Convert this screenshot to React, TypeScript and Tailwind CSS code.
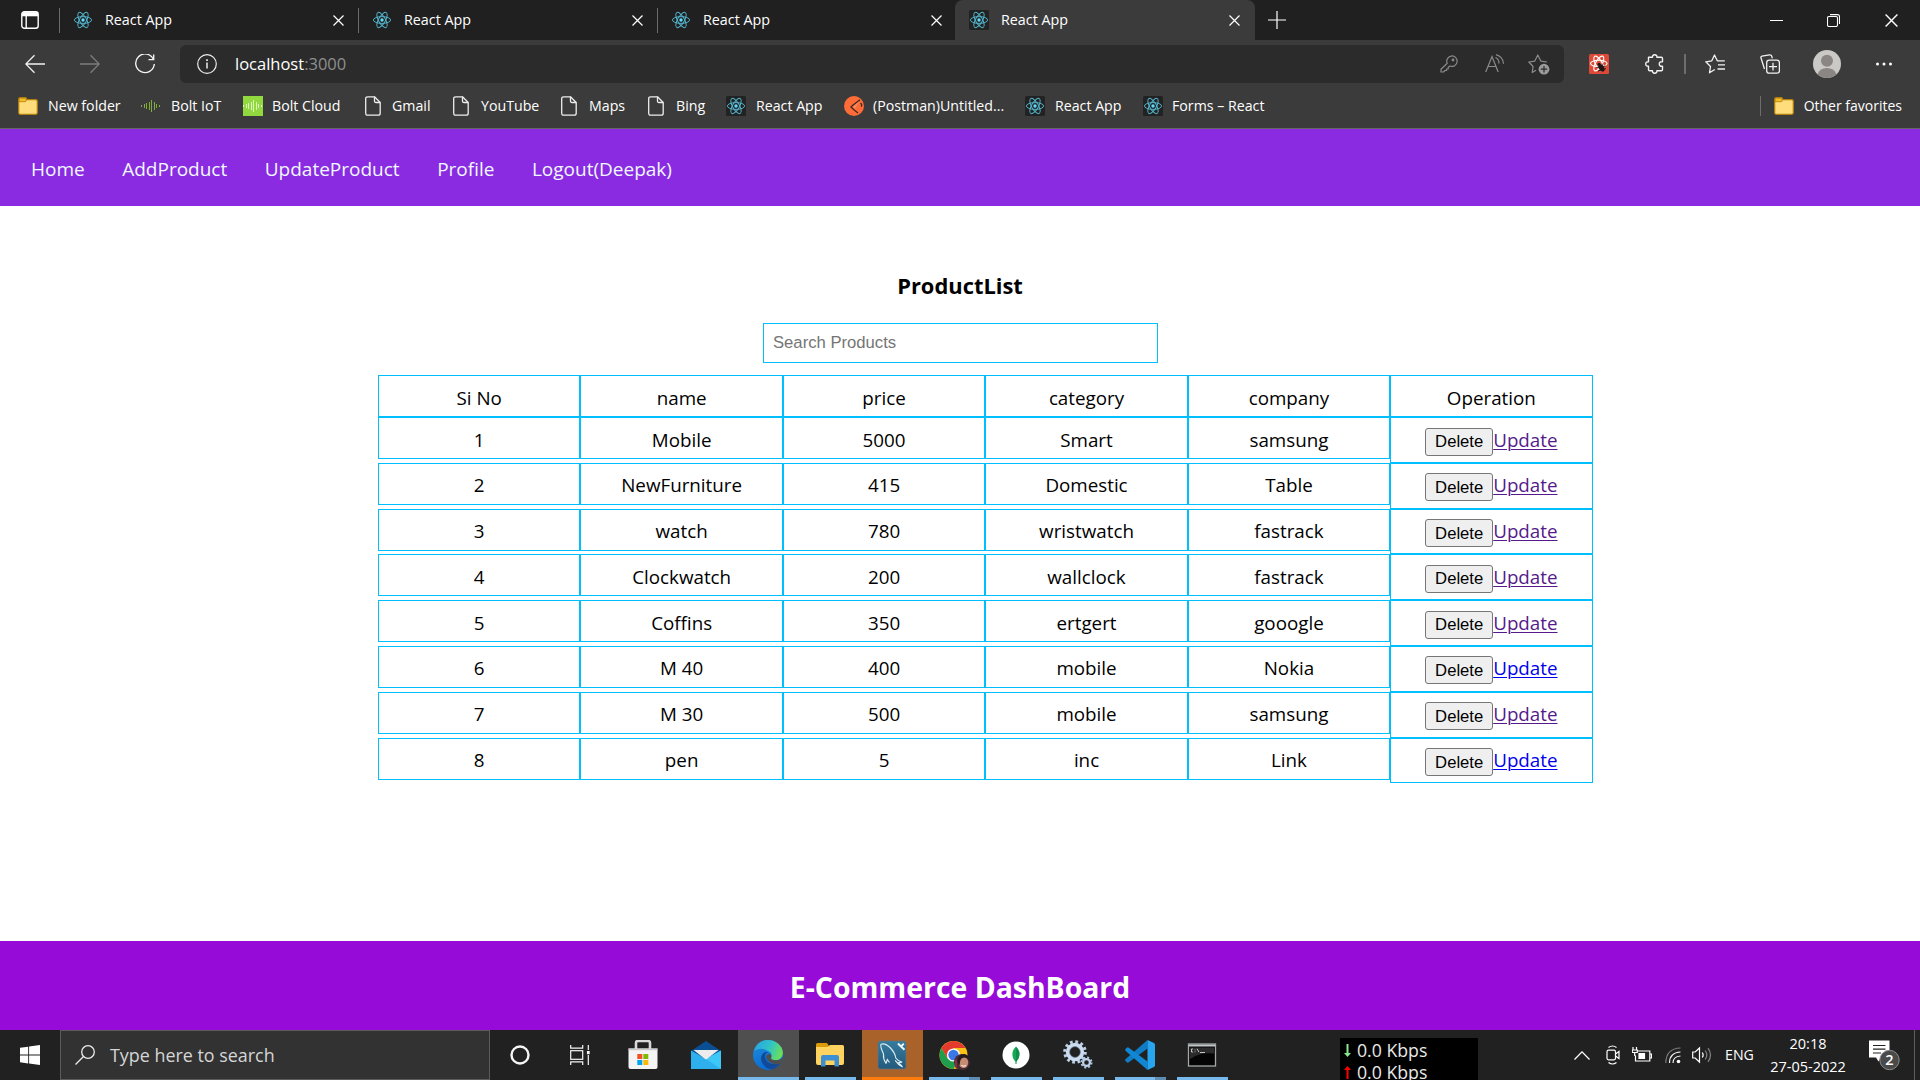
import type { ReactNode } from "react";

const OPEN = "font-['Open_Sans','Noto_Sans',sans-serif]";

function ReactLogo({ dark = false, className = "size-5" }: { dark?: boolean; className?: string }) {
  return (
    <svg viewBox="0 0 20 20" className={className}>
      {dark && <rect width="20" height="20" rx="1.5" fill="#222" />}
      <g fill="none" stroke="#53b6cf" strokeWidth="0.95">
        <ellipse cx="10" cy="10" rx="8.6" ry="3.4" />
        <ellipse cx="10" cy="10" rx="8.6" ry="3.4" transform="rotate(60 10 10)" />
        <ellipse cx="10" cy="10" rx="8.6" ry="3.4" transform="rotate(120 10 10)" />
      </g>
      <circle cx="10" cy="10" r="1.7" fill="#61dafb" />
    </svg>
  );
}

function Cross({ className = "size-[11px]" }: { className?: string }) {
  return (
    <svg viewBox="0 0 11 11" className={className} fill="none" stroke="#fff" strokeWidth="1.2">
      <path d="M.5.5l10 10M10.5.5l-10 10" />
    </svg>
  );
}

function Tab({ active = false }: { active?: boolean }) {
  return (
    <div
      className={
        active
          ? "-ml-px flex h-10 w-[300px] shrink-0 items-center rounded-t-lg bg-[#3b3b3b] pl-[14px]"
          : "relative flex h-10 w-[299px] shrink-0 items-center pl-[14px]"
      }
    >
      {!active && <span className="absolute left-0 top-2 h-[25px] w-px bg-[#6b6b6b]" />}
      <ReactLogo dark={active} />
      <span className="ml-[12px] w-[228px] text-[14.3px] leading-5 text-white">React App</span>
      <Cross />
    </div>
  );
}

function Folder() {
  return (
    <svg viewBox="0 0 20 18" className="h-[18px] w-5 shrink-0">
      <path d="M.7 2.2Q.7.7 2.2.7h5q1.2 0 1.4 1.2v.8h9.200q1.500 0 1.500 1.500v11.600q0 1.500-1.500 1.500H2.200q-1.500 0-1.500-1.500z" fill="#ffdc7c" stroke="#b07f0c" strokeWidth="1.2" />
      <path d="M1.200 2.200Q1.200 1.200 2.200 1.200h5q1 0 1 1v1.300q0 1.200-1.200 1.200H1.200z" fill="#f5bd28" stroke="#b07f0c" strokeWidth=".8" />
    </svg>
  );
}

function Wave({ tile = false }: { tile?: boolean }) {
  return (
    <svg viewBox="0 0 20 20" className="size-5 shrink-0">
      {tile && <rect width="20" height="20" fill="#92d83f" />}
      <path
        d="M.5 9v2M3.500 8v4M5.500 7v6M8.500 6v8M10.500 4v12M13.500 6v8M15.500 8v4M18.500 9v2"
        stroke={tile ? "#dcf6bd" : "#7fae3a"}
        strokeWidth="1"
      />
    </svg>
  );
}

function PageIcon() {
  return (
    <svg viewBox="0 0 16 20" className="h-5 w-4 shrink-0" fill="none" stroke="#eee" strokeWidth="1.3" strokeLinejoin="round">
      <path d="M2.700.8H9.500l5.700 5.700v10.700q0 2-2 2H2.700q-2 0-2-2V2.800q0-2 2-2z" />
      <path d="M9.500.8v4.200q0 1.500 1.500 1.500h4.200" />
    </svg>
  );
}

function Postman() {
  return (
    <svg viewBox="0 0 20 20" className="size-5 shrink-0">
      <circle cx="10" cy="10" r="10" fill="#ff6c37" />
      <path d="M16 3.800L8.500 9.500 7 11l3.500 3.200M10.500 14.200L14 17M16.500 7q2 1.500.8 3.800" fill="none" stroke="#3b2a24" strokeWidth="1.300" />
      <path d="M15.500 5L9 11l2 1.500z" fill="#ff8d63" />
    </svg>
  );
}

const bookmarks: { icon: ReactNode; label: string; box: string }[] = [
  { icon: <Folder />, label: "New folder", box: "w-[123px] gap-[10px]" },
  { icon: <Wave />, label: "Bolt IoT", box: "w-[102px] gap-[10px]" },
  { icon: <Wave tile />, label: "Bolt Cloud", box: "w-[122px] gap-[9px]" },
  { icon: <PageIcon />, label: "Gmail", box: "w-[88px] gap-[11px]" },
  { icon: <PageIcon />, label: "YouTube", box: "w-[108px] gap-[12px]" },
  { icon: <PageIcon />, label: "Maps", box: "w-[87px] gap-[12px]" },
  { icon: <PageIcon />, label: "Bing", box: "w-[78px] gap-[12px]" },
  { icon: <ReactLogo dark />, label: "React App", box: "w-[118px] gap-[10px]" },
  { icon: <Postman />, label: "(Postman)Untitled...", box: "w-[181px] gap-[9px]" },
  { icon: <ReactLogo dark />, label: "React App", box: "w-[118px] gap-[10px]" },
  { icon: <ReactLogo dark />, label: "Forms – React", box: "w-[130px] gap-[9px]" },
];

function TabStrip() {
  return (
    <div className="flex h-10 items-center bg-[#202020]">
      <div className="flex w-[59px] shrink-0 justify-center">
        <svg viewBox="0 0 18 18" className="size-[18px]" fill="none" stroke="#fff" strokeWidth="1.400">
          <rect x=".8" y=".8" width="16.400" height="16.400" rx="2.500" />
          <path d="M1 3.200h16" strokeWidth="4.200" />
          <path d="M5.200 5v12" />
        </svg>
      </div>
      <Tab />
      <Tab />
      <Tab />
      <Tab active />
      <svg viewBox="0 0 18 18" className="ml-[13px] size-[18px]" stroke="#fff" strokeWidth="1.200">
        <path d="M9 0v18M0 9h18" />
      </svg>
      <div className="ml-auto flex items-center pr-[22px]">
        <svg viewBox="0 0 13 13" className="mr-[44px] size-[13px]" stroke="#fff" strokeWidth="1">
          <path d="M0 6.500h13" />
        </svg>
        <svg viewBox="0 0 13 13" className="mr-[45px] size-[13px]" fill="none" stroke="#fff" strokeWidth="1.100">
          <rect x=".5" y="2.500" width="10" height="10" rx="1.500" />
          <path d="M3 .6h7.500q2 0 2 2V10" />
        </svg>
        <Cross className="size-[13px]" />
      </div>
    </div>
  );
}

function Toolbar() {
  return (
    <div className="flex h-[48px] items-center">
      <svg viewBox="0 0 20 20" className="ml-[25px] size-5" fill="none" stroke="#f2f2f2" strokeWidth="1.300">
        <path d="M20 10H.8M9.500 1.200L.8 10l8.700 8.800" />
      </svg>
      <svg viewBox="0 0 20 20" className="ml-[35px] size-5" fill="none" stroke="#7d7d7d" strokeWidth="1.300">
        <path d="M0 10h19.200M10.500 1.200l8.700 8.800-8.700 8.800" />
      </svg>
      <svg viewBox="0 0 20 20" className="ml-[35px] size-5" fill="none" stroke="#f2f2f2" strokeWidth="1.400">
        <path d="M18.500 5.400A9.300 9.300 0 1 0 19.300 10M13.500 5.600h5.200V.4" />
      </svg>
      <div className="ml-[25px] flex h-[38px] w-[1384px] shrink-0 items-center rounded-md bg-[#2b2b2b]">
        <svg viewBox="0 0 20 20" className="ml-[17px] size-5" fill="none" stroke="#ececec" strokeWidth="1.200">
          <circle cx="10" cy="10" r="9.300" />
          <path d="M10 8.500v6" strokeWidth="1.500" />
          <path d="M10 5.200v1.700" strokeWidth="1.700" />
        </svg>
        <span className="ml-[18px] text-[16.5px] leading-6 text-white">
          localhost<span className="text-[#8f8f8f]">:3000</span>
        </span>
        <div className="ml-auto flex items-center pr-[14px]">
          <svg viewBox="0 0 18 18" className="mr-[27px] size-[18px]" fill="none" stroke="#8c8c8c" strokeWidth="1.200" strokeLinejoin="round">
            <path d="M7.200 8.300A5.200 5.200 0 1 1 10 11L8.200 12.300V14H6.500v1.500H5L3.500 17H1v-2.800z" />
            <circle cx="13" cy="5" r=".8" />
          </svg>
          <svg viewBox="0 0 20 20" className="mr-[23px] size-5" fill="none" stroke="#8c8c8c" strokeWidth="1.200">
            <path d="M.7 18L7 2.500 13.200 18M3 12.500h8M10.500 3.500q3.500 1.500 3.500 6M11 .7q7 2 7.500 9" />
          </svg>
          <svg viewBox="0 0 22 22" className="size-[22px]">
            <path d="M8 17.200L4.200 19.500l.9-6L.8 9l6-.9L9.800 2l3 6.100 6.200.9" fill="none" stroke="#8c8c8c" strokeWidth="1.200" strokeLinejoin="round" />
            <circle cx="16" cy="16.200" r="5.400" fill="#9b9b9b" />
            <path d="M16 13v6.400M12.800 16.200h6.400" stroke="#2b2b2b" strokeWidth="1.200" />
          </svg>
        </div>
      </div>
      <svg viewBox="0 0 20 20" className="ml-[25px] size-5 shrink-0">
        <rect width="20" height="20" rx="1.500" fill="#de4a37" />
        <g fill="none" stroke="#fff" strokeWidth="1.100">
          <ellipse cx="9.800" cy="9.500" rx="8.300" ry="3.200" />
          <ellipse cx="9.800" cy="9.500" rx="8.300" ry="3.200" transform="rotate(60 9.800 9.500)" />
          <ellipse cx="9.800" cy="9.500" rx="8.300" ry="3.200" transform="rotate(120 9.800 9.500)" />
        </g>
        <ellipse cx="12.500" cy="14" rx="2.600" ry="4" transform="rotate(-35 12.500 14)" fill="#251412" />
        <circle cx="10" cy="10.200" r="1.500" fill="#251412" />
        <path d="M7.500 13.500l9-1.500M9 17l8-2.500M13 9.500l1 8" stroke="#251412" strokeWidth=".9" />
      </svg>
      <svg viewBox="0 0 20 20" className="ml-[36px] size-5 shrink-0" fill="none" stroke="#f2f2f2" strokeWidth="1.400" strokeLinejoin="round">
        <path d="M3.500 3.300h4q-.3-2.500 2.200-2.500t2.200 2.500h4.400q1.200 0 1.200 1.200v3.300q-3.200-.3-3.200 2.200t3.200 2.200v3.300q0 1.200-1.200 1.200h-4.400q.2 2.500-2.200 2.500t-2.200-2.500H4.700q-1.200 0-1.200-1.200v-3.300Q.7 12.300.7 10t2.800-2.200z" />
      </svg>
      <span className="ml-[19px] h-5 w-[1.5px] shrink-0 bg-[#6d6d6d]" />
      <svg viewBox="0 0 20 20" className="ml-[19px] size-5 shrink-0" fill="none" stroke="#f2f2f2" strokeWidth="1.300" strokeLinejoin="round">
        <path d="M9.800 15.500L4.500 18.800l1-6.300L.8 7.800l6-1L9.500 1l2.800 5.800h7.500M13 10.800h7M12.500 15h7.500" />
      </svg>
      <svg viewBox="0 0 20 20" className="ml-[35px] size-5 shrink-0" fill="none" stroke="#f2f2f2" strokeWidth="1.300">
        <path d="M4.500 15L1 4Q.5 2.500 2 2.100L9.500.8q1.800-.2 2.300 1.500l.5 2" />
        <rect x="6.700" y="6.200" width="12.700" height="13" rx="2.500" />
        <path d="M13 8.800v7.800M9 12.700h8" />
      </svg>
      <svg viewBox="0 0 28 28" className="ml-[33px] size-7 shrink-0">
        <circle cx="14" cy="14" r="14" fill="#cbc9c6" />
        <circle cx="14" cy="10.800" r="6" fill="#8b8683" />
        <path d="M4.500 24.200Q7 18 14 18t9.500 6.200Q19.500 28 14 28t-9.500-3.800z" fill="#8b8683" />
      </svg>
      <svg viewBox="0 0 18 4" className="ml-[34px] h-1 w-[18px] shrink-0" fill="#fff">
        <circle cx="2.500" cy="2" r="1.500" />
        <circle cx="9" cy="2" r="1.500" />
        <circle cx="15.500" cy="2" r="1.500" />
      </svg>
    </div>
  );
}

function BookmarkBar() {
  return (
    <div className="flex h-[36px] items-center pl-[18px] text-[14.2px] leading-5 text-white">
      {bookmarks.map((b, i) => (
        <div key={i} className={`flex shrink-0 items-center whitespace-nowrap ${b.box}`}>
          {b.icon}
          {b.label}
        </div>
      ))}
      <div className="ml-auto flex items-center pr-[18px]">
        <span className="mr-[13px] h-5 w-px bg-[#6d6d6d]" />
        <Folder />
        <span className="ml-[10px] text-[14px]">Other favorites</span>
      </div>
    </div>
  );
}

const products: [string, string, string, string, boolean][] = [
  ["Mobile", "5000", "Smart", "samsung", true],
  ["NewFurniture", "415", "Domestic", "Table", true],
  ["watch", "780", "wristwatch", "fastrack", true],
  ["Clockwatch", "200", "wallclock", "fastrack", true],
  ["Coffins", "350", "ertgert", "gooogle", true],
  ["M 40", "400", "mobile", "Nokia", false],
  ["M 30", "500", "mobile", "samsung", true],
  ["pen", "5", "inc", "Link", false],
];

function Cell({ children }: { children: ReactNode }) {
  return <li className="flex h-[42px] items-center justify-center border border-[#00bfff] pt-[4px]">{children}</li>;
}

function ProductTable() {
  return (
    <div className="ml-[378px] mt-[12px] w-[1214.6px] text-[18.8px] leading-[27px] text-black">
      <ul className="grid h-[42px] grid-cols-6">
        {["Si No", "name", "price", "category", "company", "Operation"].map((h) => (
          <Cell key={h}>{h}</Cell>
        ))}
      </ul>
      {products.map(([name, price, category, company, visited], i) => (
        <ul key={i} className="grid h-[45.8px] grid-cols-6 items-start">
          <Cell>{i + 1}</Cell>
          <Cell>{name}</Cell>
          <Cell>{price}</Cell>
          <Cell>{category}</Cell>
          <Cell>{company}</Cell>
          <li className="flex h-[45.8px] items-start justify-center border border-[#00bfff]">
            <button className="mt-[9.5px] h-[28px] w-[68px] rounded-[3px] border border-[#767676] bg-[#efefef] font-['Liberation_Sans',Arial,sans-serif] text-[16.67px] leading-[25px]">
              Delete
            </button>
            <a
              className={
                visited
                  ? "mt-[8.5px] text-[#551a8b] underline decoration-1 underline-offset-[2px]"
                  : "mt-[8.5px] text-[#0000ee] underline decoration-1 underline-offset-[2px]"
              }
            >
              Update
            </a>
          </li>
        </ul>
      ))}
    </div>
  );
}

function Store() {
  return (
    <svg viewBox="0 0 30 30" className="size-[30px]">
      <path d="M8 9V3q0-2 2-2h10q2 0 2 2v6" fill="none" stroke="#d8d8d8" strokeWidth="2.600" />
      <path d="M.5 8.500h29V27q0 2-2 2h-25q-2 0-2-2z" fill="#f4f4f4" />
      <path d="M.5 8.500h29v1.700H.5z" fill="#c9c9c9" />
      <path d="M9.300 14h5v5h-5z" fill="#f25022" />
      <path d="M15.300 14h5v5h-5z" fill="#7fba00" />
      <path d="M9.300 20h5v5h-5z" fill="#00a4ef" />
      <path d="M15.300 20h5v5h-5z" fill="#ffb900" />
    </svg>
  );
}

function Mail() {
  return (
    <svg viewBox="0 0 30 30" className="size-[30px]">
      <path d="M0 11L15 1l15 10v5H0z" fill="#0a4e94" />
      <path d="M0 10.500L15 19 30 10.500V29H0z" fill="#2fb0ee" />
      <path d="M15 19L30 10.500V29z" fill="#3dc7f7" />
      <path d="M2.500 10h25L16 19q-1 .6-2 0z" fill="#ececec" />
    </svg>
  );
}

function Edge() {
  return (
    <svg viewBox="0 0 30 30" className="size-[30px]">
      <defs>
        <linearGradient id="edgeTop" x1="0" y1="0.300" x2="1" y2="0.600">
          <stop offset="0" stopColor="#2aa5e0" />
          <stop offset=".5" stopColor="#2fc3c8" />
          <stop offset="1" stopColor="#6fe052" />
        </linearGradient>
        <linearGradient id="edgeSide" x1="0" y1="0" x2="0.300" y2="1">
          <stop offset="0" stopColor="#1f8fdc" />
          <stop offset="1" stopColor="#0a6cd0" />
        </linearGradient>
      </defs>
      <circle cx="15" cy="15" r="15" fill="url(#edgeSide)" />
      <path d="M1 11Q4 0 15 0q9 0 13.500 7.500Q32 15 27 19q-4 2.500-9 .5-1.500-1 0-3 1.500-4-3-5.500Q8 6.500 1 11z" fill="url(#edgeTop)" />
      <path d="M10.500 13q-4 4-1.500 9.500 3.500 7 10.500 6.700 5-1.500 8.500-7-6 3.300-11.500.8Q11 20 12.500 14.500q.5-1.500 2.500-2.500-2.500-.5-4.500 1z" fill="#114a9b" />
      <path d="M18.500 19.300q5 2 9 0l2.500-1.500-2 5.500q-5 2.300-9.500-.3-5-2-5.300-6.500.5-3 2.800-2.500 3 .5 2.500 3-1 1.300 0 2.300z" fill="#4e4e4e" />
    </svg>
  );
}

function Explorer() {
  return (
    <svg viewBox="0 0 30 30" className="size-[30px]">
      <path d="M1 4.500Q1 3 2.500 3h9.500l2 3v4H1z" fill="#dc9a0a" />
      <path d="M1 7h11.500L15 5h12.500Q29 5 29 6.500V23q0 2-2 2H3q-2 0-2-2z" fill="#ffd35f" />
      <path d="M6 26.500V17q0-2 2-2h14q2 0 2 2v9.500h-4.500V20.500h-9v6z" fill="#3d8fd4" />
    </svg>
  );
}

function Dolphin() {
  return (
    <svg viewBox="0 0 30 30" className="size-[30px]">
      <defs>
        <linearGradient id="sea" x1="0" y1="0" x2="0" y2="1">
          <stop offset="0" stopColor="#357c9f" />
          <stop offset="1" stopColor="#225a7c" />
        </linearGradient>
      </defs>
      <rect x="1" y="1" width="28" height="28" rx="2.500" fill="url(#sea)" stroke="#6a7378" strokeWidth=".7" />
      <path d="M9 23.500Q6 19 6.500 14 3 6.500 4 4.300q4-1.800 9 3.200 5 5 5.800 10.500 2 3 6.400 4.300-3 0-4 .4 2.500 1.700 4.300 4.200-4.500-2.200-7.300-6.500M9 23.500l1.300-4 2.200 3" fill="none" stroke="#e0edf2" strokeWidth="1.100" />
      <path d="M21 3.500l3 3 3.500 3.200M24 6.500l2.800-2.800" stroke="#f1f6f8" strokeWidth="1.900" />
    </svg>
  );
}

function Chrome() {
  return (
    <svg viewBox="0 0 32 30" className="ml-[2px] h-[30px] w-8">
      <circle cx="14.500" cy="15" r="14" fill="#fbc116" />
      <path d="M2.400 8A14 14 0 0 1 26.600 8H14.500l-6 10.500z" fill="#e33b2e" />
      <path d="M2.400 8A14 14 0 0 0 14.500 29l6-10.500H8.500z" fill="#1f9d4d" />
      <circle cx="14.500" cy="15" r="6.600" fill="#fff" />
      <circle cx="14.500" cy="15" r="5.200" fill="#3b78e7" />
      <circle cx="23" cy="22" r="8" fill="#4b2b35" />
      <ellipse cx="24.500" cy="22.500" rx="4.700" ry="5.500" fill="#c58b72" />
      <path d="M18.500 22q0-8 7-8 5.500 1 5.300 8-2-5-6-4.500-4.300.5-4 8z" fill="#251c20" />
      <path d="M16 20v7l2 2v-10z" fill="#8d2a3e" />
      <path d="M22.500 25.500q2.500 1.500 4.500 0" stroke="#fff" strokeWidth="1" fill="none" />
    </svg>
  );
}

function Mongo() {
  return (
    <svg viewBox="0 0 30 30" className="size-[30px]">
      <circle cx="15" cy="15" r="13.500" fill="#fff" />
      <path d="M15 6.500q-4 4-3.600 8.600Q11.800 19.500 15 22z" fill="#13aa52" />
      <path d="M15 6.500q4 4 3.600 8.600Q18.200 19.500 15 22z" fill="#118d4d" />
      <path d="M15 20v4" stroke="#118d4d" />
    </svg>
  );
}

function Gears() {
  return (
    <svg viewBox="0 0 30 30" className="size-[30px]" fill="none">
      <circle cx="12" cy="12" r="10.200" stroke="#bcd0e6" strokeWidth="3.200" strokeDasharray="2.700 2.640" />
      <circle cx="12" cy="12" r="7.300" stroke="#cbdcf0" strokeWidth="3.800" />
      <circle cx="12" cy="12" r="5.400" stroke="#6e8196" strokeWidth=".6" />
      <circle cx="23.500" cy="22.500" r="5" stroke="#a9c4e4" strokeWidth="2" strokeDasharray="2 1.930" />
      <circle cx="23.500" cy="22.500" r="3.400" stroke="#bcd0e6" strokeWidth="2.200" />
    </svg>
  );
}

function Code() {
  return (
    <svg viewBox="0 0 30 30" className="size-[30px]">
      <path d="M22.500 0v8.500L3.500 22.500Q2.500 23 1.700 22.300L.5 21q-.8-1 .2-1.900z" fill="#0f7cc6" />
      <path d="M22.500 30v-8.500L3.500 7.500Q2.500 7 1.700 7.700L.5 9q-.8 1 .2 1.900z" fill="#1186d2" />
      <path d="M22.500 0L29 3q1 .5 1 1.700v20.600q0 1.200-1 1.700l-6.500 3z" fill="#27a5ef" />
    </svg>
  );
}

function Terminal() {
  return (
    <svg viewBox="0 0 30 30" className="size-[30px]">
      <rect x="1.500" y="4" width="27" height="22" fill="#050505" stroke="#a4a8aa" strokeWidth="1.300" />
      <path d="M2 5.500h26" stroke="#c3c6c8" strokeWidth="2" />
      <path d="M3 7.500h24v6Q13 12 3 19z" fill="#2b2b2b" />
      <path d="M6 9h-1.500v3H6M8 9.500v.8M8 11.500v.8M10 8.700l2 3.500M13 12.500h5" fill="none" stroke="#d5d5d5" strokeWidth=".9" />
    </svg>
  );
}

function TaskButton({ children, tone = "plain" }: { children: ReactNode; tone?: "plain" | "running" | "stacked" | "active" | "alert" }) {
  const bg = tone === "active" ? "bg-[#4f4f4f]" : tone === "alert" ? "bg-[#a9622a]" : "";
  return (
    <div className="flex h-[50px] w-[62px] shrink-0 flex-col items-center">
      <div className={`flex h-[47px] w-[61px] items-center justify-center pt-[3px] ${bg}`}>{children}</div>
      {tone === "active" && <div className="h-[3px] w-[61px] bg-[#76b9ed]" />}
      {tone === "alert" && <div className="h-[3px] w-[61px] bg-[#ff7b0b]" />}
      {tone === "running" && <div className="h-[3px] w-[51px] bg-[#76b9ed]" />}
      {tone === "stacked" && (
        <div className="flex h-[3px] w-[51px]">
          <div className="w-[40px] bg-[#76b9ed]" />
          <div className="w-[11px] bg-[#5d8db3]" />
        </div>
      )}
    </div>
  );
}

function Taskbar() {
  return (
    <div className="flex h-[50px] items-center bg-[#212121] text-white">
      <div className="flex w-[60px] shrink-0 justify-center">
        <svg viewBox="0 0 20 20" className="size-5" fill="#fff">
          <path d="M0 2.800L8.200 1.700V9.600H0zM9.100 1.600L20 0v9.600H9.100zM0 10.500h8.200v7.900L0 17.300zM9.100 10.500H20V20L9.100 18.500z" />
        </svg>
      </div>
      <div className="flex h-[50px] w-[430px] shrink-0 items-center border border-[#5c5c5c] bg-[#323232]">
        <svg viewBox="0 0 20 20" className="ml-[14px] size-5" fill="none" stroke="#ededed" strokeWidth="1.300">
          <circle cx="13" cy="7" r="6.300" />
          <path d="M8.500 11.500L.5 19.500" />
        </svg>
        <span className="ml-[15px] text-[17.9px] leading-6 text-[#d6d6d6]">Type here to search</span>
      </div>
      <div className="flex w-[60px] shrink-0 justify-center">
        <svg viewBox="0 0 20 20" className="size-5" fill="none" stroke="#f5f5f5" strokeWidth="2.400">
          <circle cx="10" cy="10" r="8.500" />
        </svg>
      </div>
      <div className="flex w-[60px] shrink-0 justify-center">
        <svg viewBox="0 0 20 20" className="size-5" fill="none" stroke="#f5f5f5" strokeWidth="1.200">
          <rect x=".7" y="5.700" width="12" height="8.600" />
          <path d="M.7 0v3.200h12V0M.7 20v-3.200h12V20M18.300 0v5M18.300 10v10" />
          <path d="M18.300 6v3.200" strokeWidth="2.800" />
        </svg>
      </div>
      <div className="ml-[2px] mr-px flex w-[62px] shrink-0"><TaskButton><Store /></TaskButton></div>
      <div className="flex w-[62px] shrink-0"><TaskButton><Mail /></TaskButton></div>
      <TaskButton tone="active"><Edge /></TaskButton>
      <TaskButton tone="running"><Explorer /></TaskButton>
      <TaskButton tone="alert"><Dolphin /></TaskButton>
      <TaskButton tone="stacked"><Chrome /></TaskButton>
      <TaskButton tone="running"><Mongo /></TaskButton>
      <TaskButton tone="running"><Gears /></TaskButton>
      <TaskButton tone="stacked"><Code /></TaskButton>
      <TaskButton tone="running"><Terminal /></TaskButton>
      <div className="ml-auto flex h-[50px] items-center">
        <div className="mt-2 flex h-[42px] w-[138px] flex-col overflow-hidden bg-black pl-[4px] pt-px text-[17.7px] leading-[23px] text-[#e8e8e8]">
          <div className="flex h-[22px] shrink-0 items-center gap-[6px]">
            <svg viewBox="0 0 7 13" className="h-[13px] w-[7px]" fill="#8be68b"><path d="M2.500 0h2v9H7l-3.500 4L0 9h2.500z" /></svg>
            0.0 Kbps
          </div>
          <div className="flex h-[22px] shrink-0 items-center gap-[6px]">
            <svg viewBox="0 0 7 13" className="h-[13px] w-[7px]" fill="#ff0000"><path d="M2.500 13h2V4H7L3.500 0 0 4h2.500z" /></svg>
            0.0 Kbps
          </div>
        </div>
        <svg viewBox="0 0 16 9" className="ml-[96px] h-[9px] w-4" fill="none" stroke="#fff" strokeWidth="1.300"><path d="M.5 8.500L8 .9l7.500 7.600" /></svg>
        <svg viewBox="0 0 14 20" className="ml-[16px] h-5 w-[14px]" fill="none" stroke="#fff" strokeWidth="1.200">
          <path d="M2.500 2.500q4-3 8 0M2.500 17.500q4 3 8 0" />
          <rect x="1" y="5.200" width="8.500" height="9.600" rx="1.500" />
          <path d="M9.500 9l3.500-2.500v7L9.500 11" />
        </svg>
        <svg viewBox="0 0 20 16" className="ml-[12px] h-4 w-5" fill="none" stroke="#fff" strokeWidth="1.200">
          <path d="M5.500 4h12.300v10H3.500V8.500M18 7h1.500v4H18" />
          <path d="M7 6.500h5.500v5H7z" fill="#fff" />
          <path d="M1 0v2.500M4.500 0v2.500M.3 3h5v2.500h-5zM2.700 6v3" />
        </svg>
        <svg viewBox="0 0 16 17" className="ml-[13px] h-[17px] w-4" fill="none">
          <path d="M.8 16Q1 1.500 15.500 1" stroke="#7c7c7c" strokeWidth="1.200" />
          <path d="M4.500 16Q4.500 5.500 15.500 5M8 16Q8 9.500 15.500 9" stroke="#f0f0f0" strokeWidth="1.200" />
          <circle cx="13.500" cy="14.500" r="1.800" fill="#fff" />
        </svg>
        <svg viewBox="0 0 20 18" className="ml-[11px] h-[18px] w-5" fill="none" strokeWidth="1.200">
          <path d="M.7 6h2.500L7.500 2v14L3.200 12H.7z" stroke="#fff" />
          <path d="M10.300 6.500q1.700 2.500 0 5" stroke="#fff" />
          <path d="M13.200 4.500q3.200 4.500 0 9M16 2.200q5 6.800 0 13.600" stroke="#858585" />
        </svg>
        <span className="ml-[13px] w-[30px] text-[14.2px]">ENG</span>
        <div className="ml-[14px] flex w-[78px] flex-col items-center whitespace-nowrap text-[14.5px] leading-[23px]">
          <span>20:18</span>
          <span>27-05-2022</span>
        </div>
        <div className="relative ml-[22px] h-[32px] w-[32px]">
          <svg viewBox="0 0 32 32" className="size-8">
            <path d="M0 1.500h20.500v17H12l-2.500 4-2.500-4H0z" fill="#fff" />
            <path d="M4 6.500h12.500M4 10.200h12.500M4 14h8" stroke="#222" strokeWidth="1.200" />
            <circle cx="20.500" cy="21" r="9.700" fill="#4a4a4a" stroke="#8d8d8d" strokeWidth="1" />
          </svg>
          <span className="absolute left-[16px] top-[11px] w-[9px] text-center text-[14.5px] font-semibold leading-5">2</span>
        </div>
        <span className="ml-[13px] mr-[5px] h-[50px] w-px bg-[#5e5e5e]" />
      </div>
    </div>
  );
}

export default function App() {
  return (
    <div className={`flex h-[1080px] w-[1920px] flex-col overflow-hidden bg-white ${OPEN}`}>
      <TabStrip />
      <div className="h-[89px] shrink-0 border-b border-[#666] bg-[#3b3b3b]">
        <Toolbar />
        <BookmarkBar />
      </div>
      <nav className="flex h-[77px] shrink-0 items-center gap-[37.5px] bg-[#8a2be2] pl-[31px] pt-[3px] text-[19px] leading-7 text-[#f0f8ff]">
        <a>Home</a>
        <a>AddProduct</a>
        <a>UpdateProduct</a>
        <a>Profile</a>
        <a>Logout(Deepak)</a>
      </nav>
      <main className="flex flex-1 flex-col">
        <h3 className="mt-[64px] text-center text-[21.9px] font-bold leading-8 text-black">ProductList</h3>
        <div className="mt-[21px] flex justify-center pl-px">
          <input
            placeholder="Search Products"
            className="h-[40px] w-[395px] border border-[#00bfff] px-[9px] font-['Liberation_Sans',Arial,sans-serif] text-[16.67px] placeholder:text-[#757575]"
          />
        </div>
        <ProductTable />
      </main>
      <footer className="flex h-[89px] shrink-0 items-center justify-center bg-[#960bd8] pt-[3px] text-[28.4px] font-bold text-white">
        E-Commerce DashBoard
      </footer>
      <Taskbar />
    </div>
  );
}
